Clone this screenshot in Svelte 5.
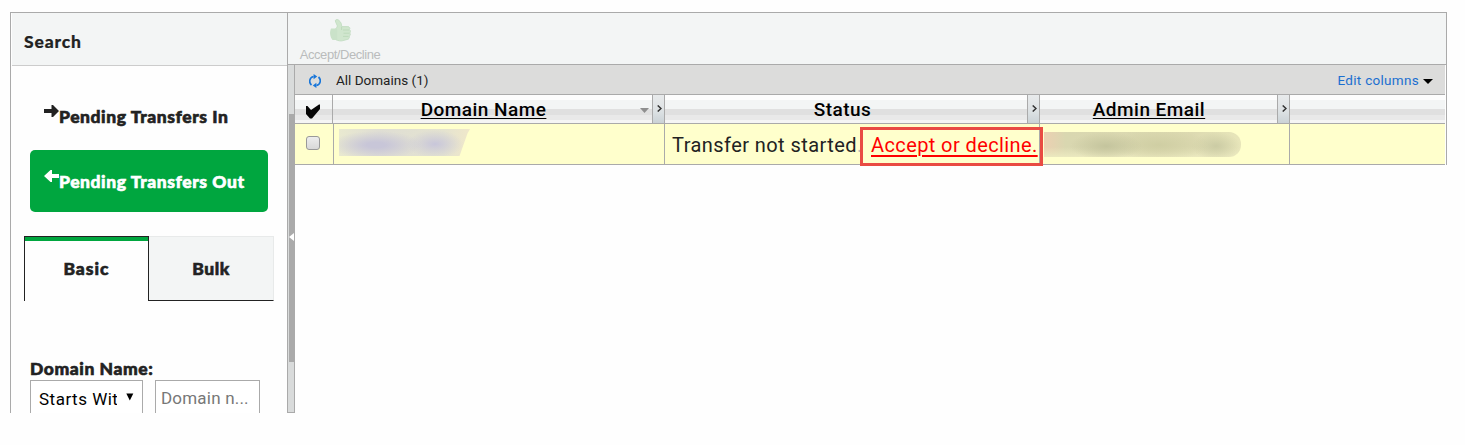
<script>
  const columns = [
    { label: 'Domain Name', link: true, sorted: true, cls: 'domain' },
    { label: 'Status', link: false, sorted: false, cls: 'status' },
    { label: 'Admin Email', link: true, sorted: false, cls: 'email' }
  ];
</script>

<div class="app">
  <aside>
    <header class="side-head"><span>Search</span></header>
    <nav>
      <div class="nav-item">
        <svg width="15" height="12" viewBox="0 0 15 12"><path d="M0 4h7.500V0H9l6 6-6 6H7.500V8H0z" fill="currentColor" /></svg><span class="in">Pending Transfers In</span>
      </div>
      <div class="nav-item active">
        <svg width="15" height="12" viewBox="0 0 15 12"><path d="M15 4H8V0H6.500L0 6l6.500 6H8V8h7z" fill="currentColor" /></svg><span class="out">Pending Transfers Out</span>
      </div>
    </nav>
    <div class="tabs">
      <div class="tab on"><span>Basic</span></div>
      <div class="tab"><span>Bulk</span></div>
    </div>
    <div class="form">
      <div class="label">Domain Name:</div>
      <div class="fields">
        <div class="select"><span>Starts With</span><svg width="8" height="8" viewBox="0 0 8 8"><path d="M.3.500h7L3.800 7.500z" /></svg></div>
        <div class="input"><span>Domain n...</span></div>
      </div>
    </div>
  </aside>

  <main>
    <div class="toolbar">
      <div class="action">
        <svg width="22" height="23" viewBox="0 0 22 23">
          <path d="M6.500 10 8.200 8C8.800 6 6.500 4 6.300 1.800 6.700.2 8.800.1 9.800 1.300c2.200 1.700 3 4 2.800 6.300h6.200c1.800 0 2.500 1.700 1.700 3 1.200 1 1.200 2.500.2 3.400 1 1 .8 2.400-.4 3.200.4 1.700-.5 3.100-2.200 3.300l-5 1.300c-2 .3-3.500 0-6.100-1z" fill="#d0e6ce" stroke="#c2dcc2" stroke-width=".9" />
          <path d="M2 9.500h5.200l1 1v9.500l-1 1H3.500C1 18 .3 13 2 9.500z" fill="#cae2c9" />
          <path d="M14 11h6M14.500 14.200h5.800M14 17.400h5.500M12.600 8v3" stroke="#bddabb" fill="none" />
        </svg>
        <span>Accept/Decline</span>
      </div>
    </div>
    <div class="lower">
      <div class="splitter">
        <div class="thumb"><svg width="5" height="8" viewBox="0 0 5 8"><path d="M0 4 5 0v8z" fill="#fff" /></svg></div>
      </div>
      <section class="grid">
        <div class="bar">
          <svg class="refresh" width="12" height="14" viewBox="0 0 12 14" fill="none" stroke="#1976d9" stroke-width="1.700">
            <path d="M4.600 2.500C.2 3.400-.4 8.600 2.500 11M7.400 11.500C11.800 10.600 12.400 5.400 9.500 3" />
            <path d="M4.600 0v5.200L8.200 2.600zM7.400 8.800V14L3.800 11.400z" fill="#1976d9" stroke="none" />
          </svg>
          <span class="all">All Domains (1)</span>
          <a class="edit" href="#columns">Edit columns</a>
          <svg class="caret" width="10" height="5" viewBox="0 0 10 5"><path d="M0 0h10L5 5z" /></svg>
        </div>
        <div class="row head">
          <div class="cell check"><svg width="15" height="15" viewBox="0 0 15 15"><path d="M0 2h1.500L5 6l8-5.500h1V5L6 14.500H4L0 10z" fill="#050505" /></svg></div>
          {#each columns as col}
            <div class="cell {col.cls}">
              <div class="title"><span class:link={col.link}>{col.label}</span></div>
              {#if col.sorted}<svg class="sort" width="9" height="5" viewBox="0 0 9 5"><path d="M0 0h9L4.500 5z" fill="#8f8f8f" /></svg>{/if}
              <div class="grip"><svg width="5" height="7" viewBox="0 0 5 7"><path d="M.7.500 4 3.500.7 6.500" fill="none" stroke="#333" stroke-width="1.500" /></svg></div>
            </div>
          {/each}
          <div class="cell rest"></div>
        </div>
        <div class="row body">
          <div class="cell check"><i class="box"></i></div>
          <div class="cell domain"><div class="smudge violet"></div></div>
          <div class="cell status"><span class="state">Transfer not started<em>.</em></span><a class="decide" href="#decide"><span>Accept or decline.</span></a></div>
          <div class="cell email"><div class="smudge olive"></div></div>
          <div class="cell rest"></div>
        </div>
      </section>
    </div>
  </main>
</div>

<style>
  :global(body) { background: #fefefe; overflow: hidden; }
  * { box-sizing: border-box; }
  svg { display: block; flex: none; }
  span { white-space: nowrap; }
  .app { display: flex; width: 1437px; height: 401px; margin: 12px 0 0 10px; font-family: Lato, sans-serif; color: #222; }
  aside { width: 278px; border: solid #aaa; border-width: 1px 1px 0 1px; font-weight: 900; font-size: 17.500px; letter-spacing: .56px; -webkit-text-stroke: .6px; overflow: hidden; }
  .side-head { height: 53px; margin-left: 1px; padding: 4px 0 0 12px; background: #f3f5f5; border-bottom: 1px solid #ccc; line-height: 50px; -webkit-text-stroke: .2px; letter-spacing: .85px; }
  nav { padding: 18px 19px 0; }
  .nav-item { display: flex; height: 62px; margin-bottom: 4px; padding-left: 14px; line-height: 65px; }
  .nav-item svg { margin-top: 21px; }
  .nav-item.active svg { margin-top: 20px; }
  .active { margin-bottom: 0; border-radius: 5px; background: #00a63f; color: #fff; line-height: 63px; }
  .tabs { display: flex; width: 250px; height: 65px; margin: 24px 0 0 13px; line-height: 64px; text-align: center; }
  .tab { flex: 1; background: #f3f5f5; border: solid #e8eaea; border-width: 1px 1px 1px 0; border-bottom-color: #222; }
  .tab.on { flex: none; width: 125px; letter-spacing: 1px; background: #fefefe; border: 1px solid #222; border-bottom: 0; box-shadow: inset 0 4px #00a63f; }
  .form { padding: 57px 19px 0; }
  .label { height: 22px; line-height: 22px; }
  .fields { display: flex; gap: 12px; font-weight: 400; font-size: 17px; font-family: Roboto, sans-serif; color: #000; -webkit-text-stroke: 0; }
  .select, .input { display: flex; height: 42px; border: 1px solid #aaa; background: #fff; line-height: 36px; }
  .select { width: 113px; padding-left: 8px; }
  .select span { width: 78px; overflow: hidden; letter-spacing: .5px; }
  .select svg { margin: 12px 0 0 9px; }
  .input { width: 105px; padding-left: 5px; color: #777; letter-spacing: .2px; line-height: 35px; }

  main { flex: 1; display: flex; flex-direction: column; }
  .toolbar { height: 53px; background: #f3f5f5; border: solid #aaa; border-width: 1px 1px 1px 0; padding: 6px 0 0 12px; }
  .action { display: flex; flex-direction: column; align-items: center; width: 80px; color: #babcbc; font: 13px/15px "Liberation Sans", sans-serif; letter-spacing: -.45px; }
  .action span { margin-top: 5px; }
  .lower { display: flex; flex: 1; }
  .splitter { width: 7px; height: 348px; padding: 49px 0 0 1px; background: #d9dbdb; border-right: 1px solid #aaa; border-bottom: 1px solid #aaa; }
  .thumb { width: 6px; height: 248px; background: #aaa; padding: 119px 0 0 0; }
  .grid { width: 1152px; height: 100px; border-right: 1px solid #aaa; padding-right: 1px; font-family: Roboto, sans-serif; }
  .bar { display: flex; height: 30px; background: #dcdcdb; border-bottom: 1px solid #aaa; font-size: 13.500px; line-height: 30px; padding-left: 14px; }
  .refresh { margin: 9px 15px 0 0; }
  .edit { margin-left: auto; color: #1b6fd0; text-decoration: none; white-space: nowrap; letter-spacing: .3px; }
  .caret { margin: 14px 12px 0 4px; }
  .row { display: flex; }
  .cell { display: flex; border-right: 1px solid #aaa; flex: none; }
  .rest { flex: 1; border: 0; }
  .head { height: 29px; border-bottom: 1px solid #aaa; color: #000; font-size: 19px; font-weight: 500; line-height: 29px; letter-spacing: .47px; background: linear-gradient(#fdfdfd 0 5px, #f3f5f5 5px 14px, #e0e0e0 14px 20px, #e9e9e9 20px 25px, #f5f5f5 25px); }
  .domain { width: 332px; }
  .body .domain { width: 331px; }
  .status { width: 375px; }
  .email { width: 250px; }
  .head .check { width: 38px; padding: 9px 0 0 11px; }
  .body .check { width: 39px; padding: 12px 0 0 11px; }
  .head .title { flex: 1; text-align: center; }
  .head .domain .title { padding-right: 6px; }
  .head .status .title { padding-right: 7px; }
  .head .email .title { padding-right: 19px; }
  .link { text-decoration: underline; text-decoration-thickness: 1px; text-underline-offset: 2px; }
  .sort { margin: 13px 3px 0 0; }
  .grip { width: 12px; border-left: 1px solid #aaa; background: linear-gradient(#e8eaeb, #dce1e3 60%, #cbd2d6); padding: 10px 0 0 4px; }
  .body { height: 41px; border-bottom: 1px solid #aaa; background: #ffc; font-size: 20px; line-height: 42px; }
  .body .domain, .body .email { padding-top: 5px; }
  .box { width: 14px; height: 14px; border: 1px solid #999; border-radius: 3px; background: linear-gradient(#ededed, #d8d8d8); }
  .body .status { padding-left: 7px; position: relative; }
  .state em { color: #bbb; font-style: normal; }
  .state { letter-spacing: .43px; }
  .decide { position: absolute; left: 195px; top: 3px; width: 183px; height: 39px; padding-left: 8px; border: 3px solid #e94b43; color: #f00; line-height: 30px; letter-spacing: .4px; text-underline-offset: 3px; text-decoration-thickness: 2px; z-index: 1; }
  .smudge.violet { width: 131px; height: 27px; margin-left: 5px; clip-path: polygon(0 0, 100% 0, 98% 18%, 92% 100%, 0 100%); background: radial-gradient(ellipse 46px 14px at 37px 16px, #c8c6d8, #c8c6d8 20%, #c8c6d800), radial-gradient(ellipse 28px 14px at 96px 15px, #c8c6da, #c8c6da00), linear-gradient(90deg, #e9e9d0, #dfded4 30%, #e4e3d0 80%, #f0e8ca); }
  .smudge.olive { width: 197px; height: 25px; margin: 3px 0 0 4px; border-radius: 0 12px 12px 0; background: radial-gradient(ellipse 36px 14px at 62px 14px, #c4c49d, #c4c49d00), radial-gradient(ellipse 50px 16px at 115px 13px, #cfcea3, #cfcea300), radial-gradient(ellipse 24px 14px at 172px 14px, #cbcba4, #cbcba400), linear-gradient(#e6e4b800 60%, #ebe9bf), linear-gradient(90deg, #ecd0b2, #d9d7b0 22px, #dddab1 75%, #e8e6ba); }
</style>
